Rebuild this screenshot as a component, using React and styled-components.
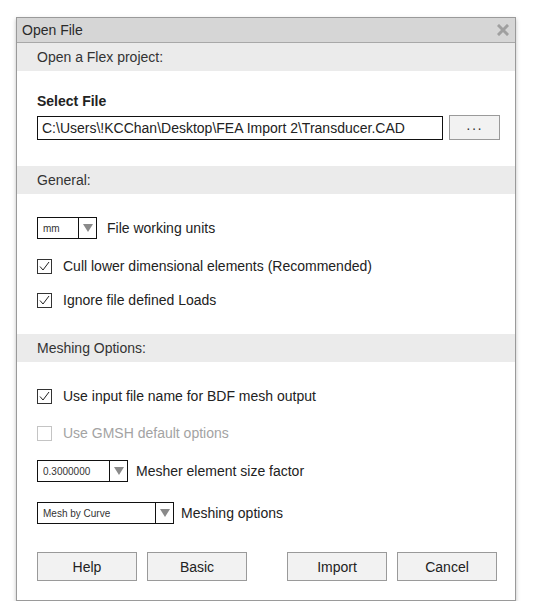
import React from "react";
import styled, { createGlobalStyle } from "styled-components";

const Global = createGlobalStyle`
  html, body { margin: 0; padding: 0; background: #ffffff; }
  body { font-family: "Liberation Sans", Arial, Helvetica, sans-serif; color: #222; }
  * { box-sizing: border-box; }
`;

const Page = styled.div`
  padding: 17px 0 0 16px;
`;

const Dialog = styled.div`
  width: 500px;
  height: 584px;
  background: #fff;
  border: 1px solid #9a9a9a;
  box-shadow: 0 2px 4px rgba(0, 0, 0, 0.25);
  display: flex;
  flex-direction: column;
`;

const TitleBar = styled.div`
  height: 25px;
  background: #d6d6d6;
  border-bottom: 1px solid #a8a8a8;
  display: flex;
  align-items: center;
  justify-content: space-between;
  padding: 0 6px 0 5px;
  font-size: 14px;
  color: #2a2a2a;
`;

const Close = styled.span`
  display: flex;
  width: 12px;
  height: 12px;
`;

const SectionHeader = styled.div`
  height: 28px;
  background: #ebebeb;
  display: flex;
  align-items: center;
  padding-left: 20px;
  font-size: 14px;
  color: #333;
`;

const Body = styled.div`
  padding: ${(p) => p.$pad};
  display: flex;
  flex-direction: column;
`;

const Label = styled.div`
  font-size: 14px;
  font-weight: bold;
  line-height: 16px;
  color: #222;
`;

const FileRow = styled.div`
  display: flex;
  gap: 6px;
  margin-top: 7px;
`;

const PathInput = styled.div`
  flex: 0 0 406px;
  height: 24px;
  border: 1px solid #111;
  display: flex;
  align-items: center;
  padding-left: 4px;
  font-size: 14px;
  color: #222;
  white-space: nowrap;
  overflow: hidden;
`;

const BrowseButton = styled.div`
  flex: 0 0 51px;
  height: 25px;
  margin-top: -1px;
  border: 1px solid #9a9a9a;
  background: #f2f2f2;
  display: flex;
  align-items: center;
  justify-content: center;
  font-size: 14px;
  color: #333;
  letter-spacing: 1px;
`;

const Row = styled.div`
  display: flex;
  align-items: center;
  height: 22px;
  margin-top: ${(p) => p.$mt || 0}px;
  gap: ${(p) => p.$gap || 11}px;
  font-size: 14px;
  color: ${(p) => (p.$disabled ? "#a3a3a3" : "#222")};
`;

const Select = styled.div`
  flex: 0 0 ${(p) => p.$w}px;
  height: 22px;
  border: 1px solid #111;
  display: flex;
  align-items: stretch;
`;

const SelectValue = styled.div`
  flex: 1;
  display: flex;
  align-items: center;
  padding-left: 5px;
  font-size: 10px;
  color: #333;
  border-right: 1px solid #111;
`;

const SelectArrow = styled.div`
  width: 17px;
  display: flex;
  align-items: center;
  justify-content: center;
`;

const Box = styled.div`
  width: 15px;
  height: 15px;
  border: 1px solid ${(p) => (p.$disabled ? "#c4c4c4" : "#333")};
  display: flex;
  align-items: center;
  justify-content: center;
  flex-shrink: 0;
`;

const Buttons = styled.div`
  display: flex;
  margin-top: 28px;
  padding: 0 0 0 20px;
`;

const Button = styled.div`
  flex: 0 0 100px;
  height: 29px;
  border: 1px solid #9a9a9a;
  background: #f2f2f2;
  display: flex;
  align-items: center;
  justify-content: center;
  font-size: 14px;
  color: #222;
  margin-left: ${(p) => p.$ml || 0}px;
`;

const Arrow = () => (
  <SelectArrow>
    <svg width="10" height="8" viewBox="0 0 10 8">
      <polygon points="0,0 10,0 5,8" fill="#8a8a8a" />
    </svg>
  </SelectArrow>
);

const Check = ({ checked, disabled, children, mt }) => (
  <Row $mt={mt} $disabled={disabled}>
    <Box $disabled={disabled}>
      {checked && (
        <svg width="13" height="13" viewBox="0 0 13 13">
          <polyline points="2,6.5 5,10 11,2" fill="none" stroke="#222" strokeWidth="1" />
        </svg>
      )}
    </Box>
    {children}
  </Row>
);

const Dropdown = ({ w, value, children, mt, gap }) => (
  <Row $mt={mt} $gap={gap}>
    <Select $w={w}>
      <SelectValue>{value}</SelectValue>
      <Arrow />
    </Select>
    {children}
  </Row>
);

export default function App() {
  return (
    <Page>
      <Global />
      <Dialog>
        <TitleBar>
          <span>Open File</span>
          <Close>
            <svg width="12" height="12" viewBox="0 0 12 12">
              <path d="M2 2 L10 10 M10 2 L2 10" stroke="#a0a0a0" strokeWidth="3" strokeLinecap="square" />
            </svg>
          </Close>
        </TitleBar>
        <SectionHeader>Open a Flex project:</SectionHeader>
        <Body $pad="22px 0 26px 20px">
          <Label>Select File</Label>
          <FileRow>
            <PathInput>C:\Users\!KCChan\Desktop\FEA Import 2\Transducer.CAD</PathInput>
            <BrowseButton>···</BrowseButton>
          </FileRow>
        </Body>
        <SectionHeader>General:</SectionHeader>
        <Body $pad="23px 20px 23px">
          <Dropdown w={60} value="mm" gap={10}>File working units</Dropdown>
          <Check checked mt={16}>Cull lower dimensional elements (Recommended)</Check>
          <Check checked mt={12}>Ignore file defined Loads</Check>
        </Body>
        <SectionHeader>Meshing Options:</SectionHeader>
        <Body $pad="23px 20px 0">
          <Check checked>Use input file name for BDF mesh output</Check>
          <Check disabled mt={15}>Use GMSH default options</Check>
          <Dropdown w={91} value="0.3000000" gap={8} mt={16}>Mesher element size factor</Dropdown>
          <Dropdown w={137} value="Mesh by Curve" gap={7} mt={20}>Meshing options</Dropdown>
        </Body>
        <Buttons>
          <Button>Help</Button>
          <Button $ml={10}>Basic</Button>
          <Button $ml={40}>Import</Button>
          <Button $ml={10}>Cancel</Button>
        </Buttons>
      </Dialog>
    </Page>
  );
}
